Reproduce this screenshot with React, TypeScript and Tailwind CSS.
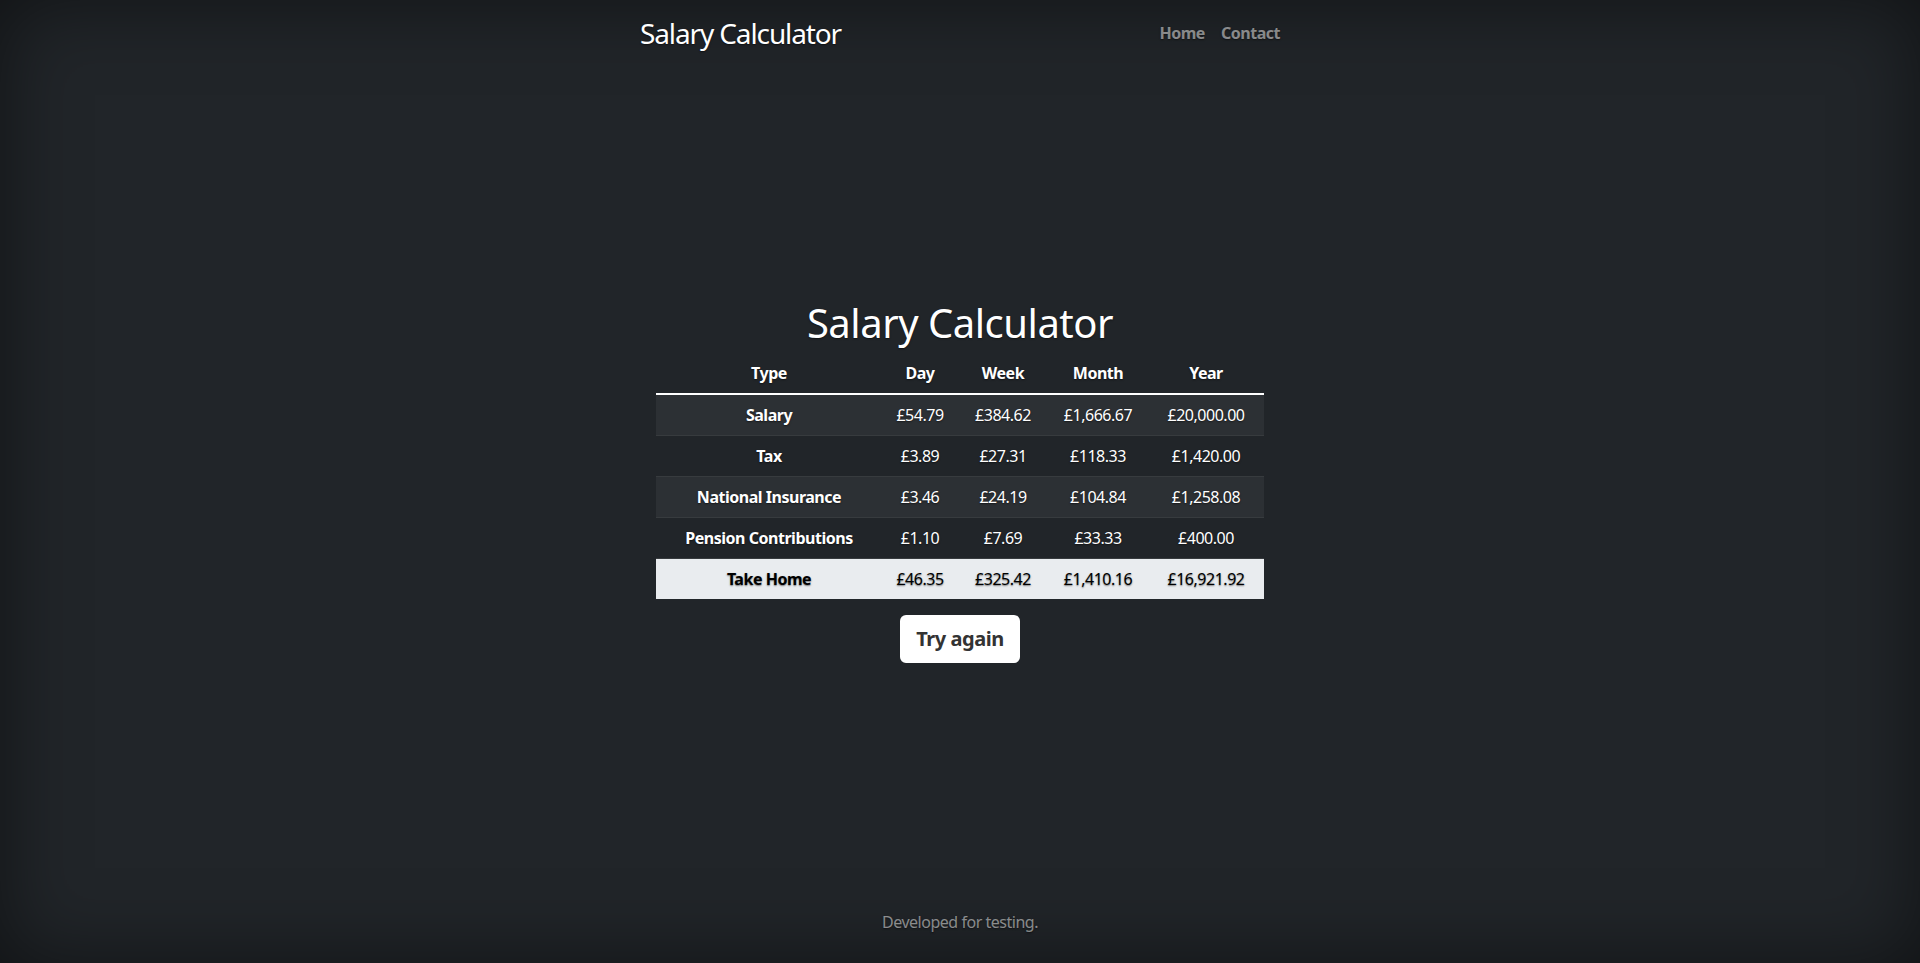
import React from "react";

const rows = [
  { type: "Salary", day: "£54.79", week: "£384.62", month: "£1,666.67", year: "£20,000.00" },
  { type: "Tax", day: "£3.89", week: "£27.31", month: "£118.33", year: "£1,420.00" },
  { type: "National Insurance", day: "£3.46", week: "£24.19", month: "£104.84", year: "£1,258.08" },
  { type: "Pension Contributions", day: "£1.10", week: "£7.69", month: "£33.33", year: "£400.00" },
];

export default function App() {
  const font = { fontFamily: '"Noto Sans", "Open Sans", sans-serif' };
  return (
    <div
      className="h-[963px] w-full bg-[#212529] text-white shadow-[inset_0_0_5rem_rgba(0,0,0,0.5)] [text-shadow:0_0.05rem_0.1rem_rgba(0,0,0,0.5)] flex flex-col tracking-[-0.03em]"
      style={font}
    >
      <div className="mx-auto w-[672px] px-4 pt-4 flex flex-col h-full">
        <header className="flex items-center justify-between h-[34px]">
          <h3 className="text-[28px] leading-[34px] font-normal text-white tracking-[-0.04em]">Salary Calculator</h3>
          <nav className="flex gap-4 text-[16px] font-bold text-white/50">
            <a>Home</a>
            <a>Contact</a>
          </nav>
        </header>
        <main className="flex-1 flex flex-col items-center justify-center pt-[2px]">
          <h1 className="text-[40px] leading-[48px] font-normal mb-[6px]">Salary Calculator</h1>
          <table className="w-[608px] text-[16px] leading-[24px] border-collapse">
            <thead>
              <tr className="font-bold">
                <th className="w-[226px] py-2">Type</th>
                <th className="w-[76px] py-2">Day</th>
                <th className="w-[90px] py-2">Week</th>
                <th className="w-[100px] py-2">Month</th>
                <th className="w-[116px] py-2">Year</th>
              </tr>
            </thead>
            <tbody className="border-t-2 border-white">
              {rows.map((r, i) => (
                <tr
                  key={r.type}
                  className={`${i % 2 === 0 ? "bg-[#2c3034]" : "bg-[#212529]"} border-b border-[#373b3e] text-center`}
                >
                  <td className="py-2 font-bold">{r.type}</td>
                  <td className="py-2">{r.day}</td>
                  <td className="py-2">{r.week}</td>
                  <td className="py-2">{r.month}</td>
                  <td className="py-2">{r.year}</td>
                </tr>
              ))}
              <tr className="bg-[#e9ecef] text-black text-center">
                <td className="py-2 font-bold">Take Home</td>
                <td className="py-2">£46.35</td>
                <td className="py-2">£325.42</td>
                <td className="py-2">£1,410.16</td>
                <td className="py-2">£16,921.92</td>
              </tr>
            </tbody>
          </table>
          <button className="mt-4 h-[48px] w-[120px] rounded-[6px] bg-white text-[#333] text-[20px] font-bold [text-shadow:none]">
            Try again
          </button>
        </main>
        <footer className="text-center text-white/50 text-[16px] leading-[24px] pb-[29px]">
          Developed for testing.
        </footer>
      </div>
    </div>
  );
}
